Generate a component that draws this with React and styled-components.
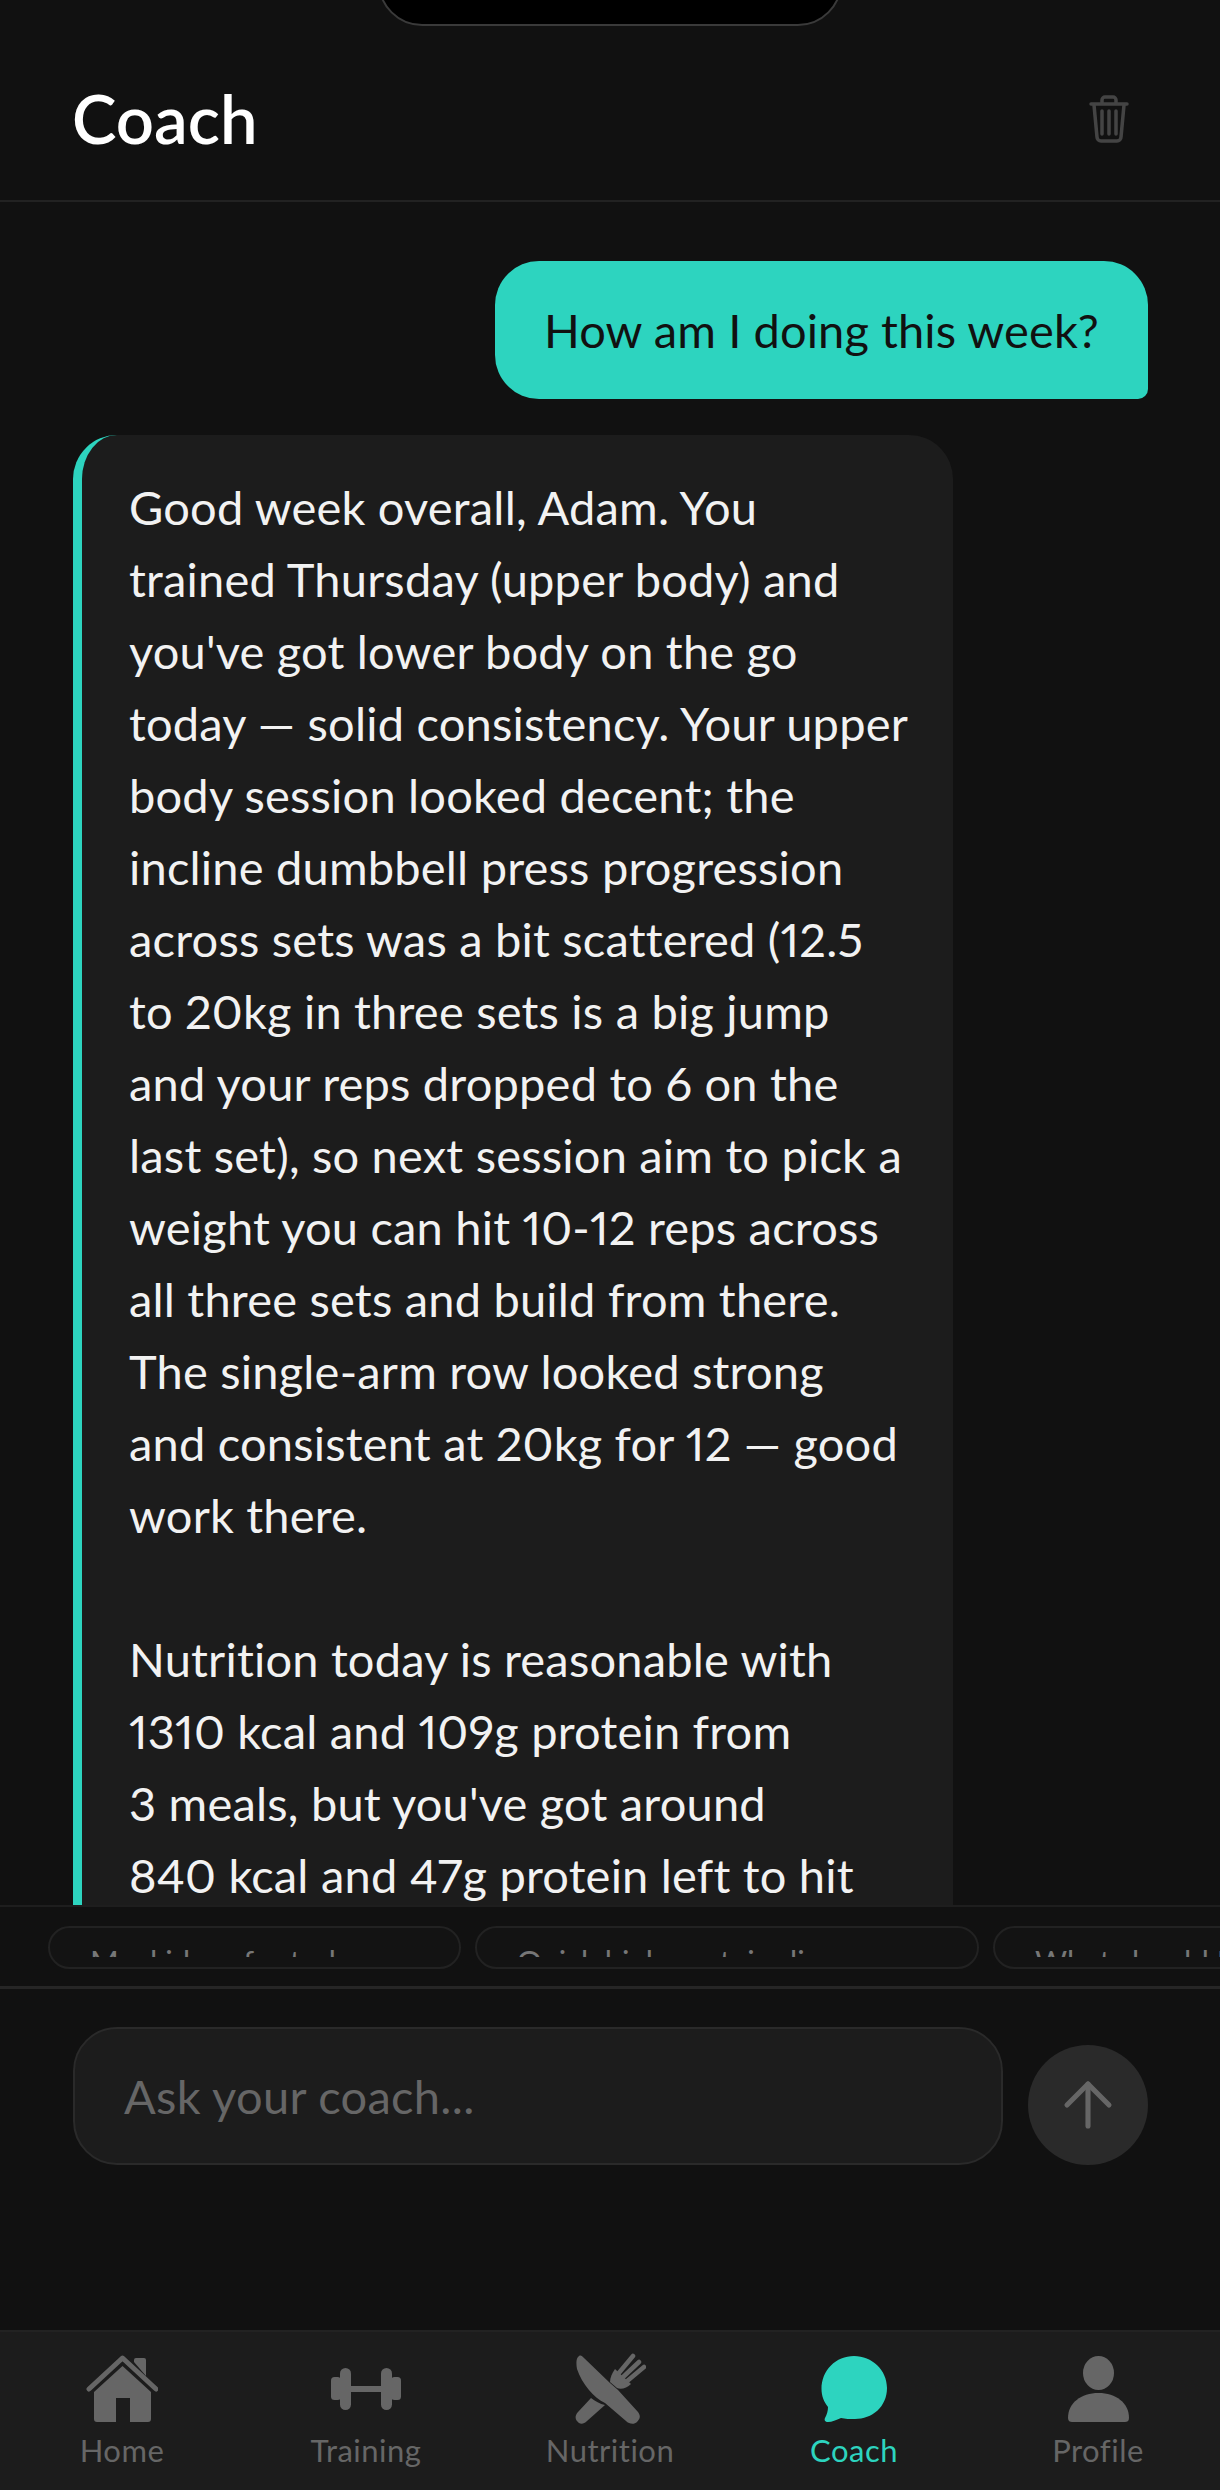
import React from 'react'
import styled, { createGlobalStyle } from 'styled-components'
import { ArrowUp } from 'lucide-react'

const GlobalStyle = createGlobalStyle`
  html, body {
    margin: 0;
    padding: 0;
    background: #111111;
  }
`

const Screen = styled.div`
  position: relative;
  width: 1220px;
  height: 2490px;
  display: flex;
  flex-direction: column;
  overflow: hidden;
  background: #111111;
  color: #f2f2f2;
  font-family: Lato, "Noto Sans", sans-serif;
  font-variant-numeric: proportional-nums;
`

const Notch = styled.div`
  position: absolute;
  top: -40px;
  left: 378px;
  width: 464px;
  height: 66px;
  box-sizing: border-box;
  background: #000;
  border: 2px solid #3a3a3a;
  border-radius: 0 0 44px 44px;
`

const Header = styled.header`
  height: 202px;
  flex: none;
  box-sizing: border-box;
  padding: 38px 91px 0 72px;
  display: flex;
  justify-content: space-between;
  align-items: center;
  border-bottom: 2px solid #222;
`

const Title = styled.h1`
  margin: 0 0 3px;
  font-size: 67px;
  font-weight: 600;
  color: #fff;
`

const TrashIcon = styled.svg`
  width: 40px;
  height: 50px;
  fill: none;
  stroke: #444;
  stroke-width: 3.5;
  stroke-linecap: round;
  stroke-linejoin: round;
`

const Messages = styled.div`
  flex: 1;
  min-height: 0;
  overflow: hidden;
  padding: 59px 72px 0 73px;
  display: flex;
  flex-direction: column;
  gap: 36px;
`

const UserBubble = styled.div`
  align-self: flex-end;
  flex: none;
  box-sizing: border-box;
  height: 138px;
  padding: 0 49px;
  display: flex;
  align-items: center;
  background: #2dd4bf;
  color: #111;
  font-size: 47px;
  letter-spacing: 0.1px;
  border-radius: 44px 44px 10px 44px;
`

const CoachBubble = styled.div`
  flex: none;
  width: 880px;
  box-sizing: border-box;
  padding: 36px 0 44px 47px;
  background: #1c1c1c;
  border-left: 9px solid #2dd4bf;
  border-radius: 44px;
  font-size: 47px;
  line-height: 72px;
  letter-spacing: 0.2px;
  white-space: pre;
`

const ChipBar = styled.div`
  height: 84px;
  flex: none;
  box-sizing: border-box;
  padding: 19px 0 0 48px;
  display: flex;
  gap: 14px;
  overflow: hidden;
  border-top: 2px solid #1e1e1e;
  border-bottom: 3px solid #262626;
`

const Chip = styled.div`
  flex: none;
  width: ${(p) => p.$w}px;
  height: 43px;
  box-sizing: border-box;
  border: 2px solid #222;
  border-radius: 22px;
  background: #131313;
  padding: 18px 40px 0;
`

const ChipLabel = styled.div`
  height: 11px;
  overflow: hidden;
  color: #777;
  font-size: 31px;
  line-height: 1;
  white-space: nowrap;
`

const InputRow = styled.div`
  flex: none;
  padding: 38px 72px 165px 73px;
  display: flex;
  align-items: flex-end;
  gap: 25px;
`

const InputBox = styled.div`
  flex: 1;
  height: 138px;
  box-sizing: border-box;
  padding: 0 49px;
  display: flex;
  align-items: center;
  background: #1c1c1c;
  border: 2px solid #2a2a2a;
  border-radius: 44px;
  color: #666;
  font-size: 47px;
  letter-spacing: 0.3px;
`

const SendButton = styled.div`
  width: 120px;
  height: 120px;
  flex: none;
  border-radius: 50%;
  background: #2a2a2a;
  color: #666;
  display: flex;
  align-items: center;
  justify-content: center;
`

const TabBar = styled.nav`
  height: 160px;
  flex: none;
  box-sizing: border-box;
  display: flex;
  background: #1c1c1c;
  border-top: 2px solid #222;
`

const Tab = styled.div`
  width: 244px;
  display: flex;
  flex-direction: column;
  align-items: center;
  padding-top: 20px;
  color: ${(p) => (p.$active ? '#2dd4bf' : '#666')};
  font-size: 31px;
  letter-spacing: 0.5px;
`

const TabIcon = styled.svg`
  width: 72px;
  height: 72px;
  fill: currentColor;
  margin-bottom: 7px;
`

const copy = `Good week overall, Adam. You
trained Thursday (upper body) and
you've got lower body on the go
today — solid consistency. Your upper
body session looked decent; the
incline dumbbell press progression
across sets was a bit scattered (12.5
to 20kg in three sets is a big jump
and your reps dropped to 6 on the
last set), so next session aim to pick a
weight you can hit 10-12 reps across
all three sets and build from there.
The single-arm row looked strong
and consistent at 20kg for 12 — good
work there.

Nutrition today is reasonable with
1310 kcal and 109g protein from
3 meals, but you've got around
840 kcal and 47g protein left to hit
your targets, so aim for a solid dinner`

const Trash = () => (
  <TrashIcon viewBox="0 0 40 50">
    <path d="M2 10 H38" />
    <path d="M13 9 V6 a3 3 0 0 1 3 -3 h8 a3 3 0 0 1 3 3 V9" />
    <path d="M5 11 L8 43 a4 4 0 0 0 4 4 H28 a4 4 0 0 0 4 -4 L35 11" />
    <path d="M13 17 V40 M20 17 V40 M27 17 V40" />
  </TrashIcon>
)

const HomeIcon = () => (
  <TabIcon viewBox="0 0 72 72">
    <path d="M48 10 V8 a2 2 0 0 1 2 -2 h8 a2 2 0 0 1 2 2 V24 Z" />
    <path d="M3 37 L36.5 6 L70 37" fill="none" stroke="currentColor" strokeWidth="5" strokeLinecap="round" strokeLinejoin="round" />
    <path d="M36.5 14 L65 40 V67 a3 3 0 0 1 -3 3 H44 V46 H30 V70 H11 a3 3 0 0 1 -3 -3 V40 Z" />
  </TabIcon>
)

const DumbbellIcon = () => (
  <TabIcon viewBox="0 0 72 72">
    <rect x="1" y="25" width="10" height="23" rx="3.5" />
    <rect x="10" y="16" width="11" height="42" rx="5.5" />
    <rect x="20" y="34" width="32" height="6" />
    <rect x="51" y="16" width="11" height="42" rx="5.5" />
    <rect x="61" y="25" width="10" height="23" rx="3.5" />
  </TabIcon>
)

const CutleryIcon = () => (
  <TabIcon viewBox="0 0 72 72">
    <path d="M5 4 C7 3 8 4 10 6 L36 31 L44 38 L64 60 C67 64 66 67 63 70 C60 73 55 72 52 69 L31 51 C20 46 8 32 3 17 C2 11 2 6 5 4 Z" />
    <path d="M17 46 C21 49 26 52 31 53 L13 69 C9 73 5 72 3 69 C1 67 1 63 4 60 Z" />
    <path d="M44 22 L59 4 M48 26 L65 10 M52 30 L70 15" fill="none" stroke="currentColor" strokeWidth="4.5" strokeLinecap="round" />
    <path d="M41 17 L57 32 C53 36 47 38 43 36 L36 30 C36 26 38 21 41 17 Z" />
  </TabIcon>
)

const ChatIcon = () => (
  <TabIcon viewBox="0 0 72 72">
    <path d="M36 4 C54 4 69 18 69 36 C69 55 54 67 37 67 C32 67 27 67 23 66 C18 68 14 70 10 70 C7 70 6 68 7 66 C9 62 10 59 10 55 C6 50 3.5 44 3.5 37 C3.5 18 18 4 36 4 Z" />
  </TabIcon>
)

const PersonIcon = () => (
  <TabIcon viewBox="0 0 72 72">
    <ellipse cx="36.5" cy="21" rx="15.5" ry="17" />
    <path d="M6 66 C6 51 19 41 36.5 41 C54 41 67 51 67 66 C67 69 65 70 63 70 H10 C8 70 6 69 6 66 Z" />
  </TabIcon>
)

const tabs = [
  { label: 'Home', Icon: HomeIcon },
  { label: 'Training', Icon: DumbbellIcon },
  { label: 'Nutrition', Icon: CutleryIcon },
  { label: 'Coach', Icon: ChatIcon, active: true },
  { label: 'Profile', Icon: PersonIcon },
]

const chips = [
  { label: 'Meal ideas for today', w: 413 },
  { label: 'Quick high-protein dinner', w: 504 },
  { label: 'What should I eat today', w: 460 },
]

const App = () => {
  return (
    <>
      <GlobalStyle />
      <Screen>
        <Notch />
        <Header>
          <Title>Coach</Title>
          <Trash />
        </Header>
        <Messages>
          <UserBubble>How am I doing this week?</UserBubble>
          <CoachBubble>{copy}</CoachBubble>
        </Messages>
        <ChipBar>
          {chips.map((c) => (
            <Chip key={c.label} $w={c.w}>
              <ChipLabel>{c.label}</ChipLabel>
            </Chip>
          ))}
        </ChipBar>
        <InputRow>
          <InputBox>Ask your coach...</InputBox>
          <SendButton>
            <ArrowUp size={72} strokeWidth={1.7} />
          </SendButton>
        </InputRow>
        <TabBar>
          {tabs.map(({ label, Icon, active }) => (
            <Tab key={label} $active={active}>
              <Icon />
              {label}
            </Tab>
          ))}
        </TabBar>
      </Screen>
    </>
  )
}

export default App
